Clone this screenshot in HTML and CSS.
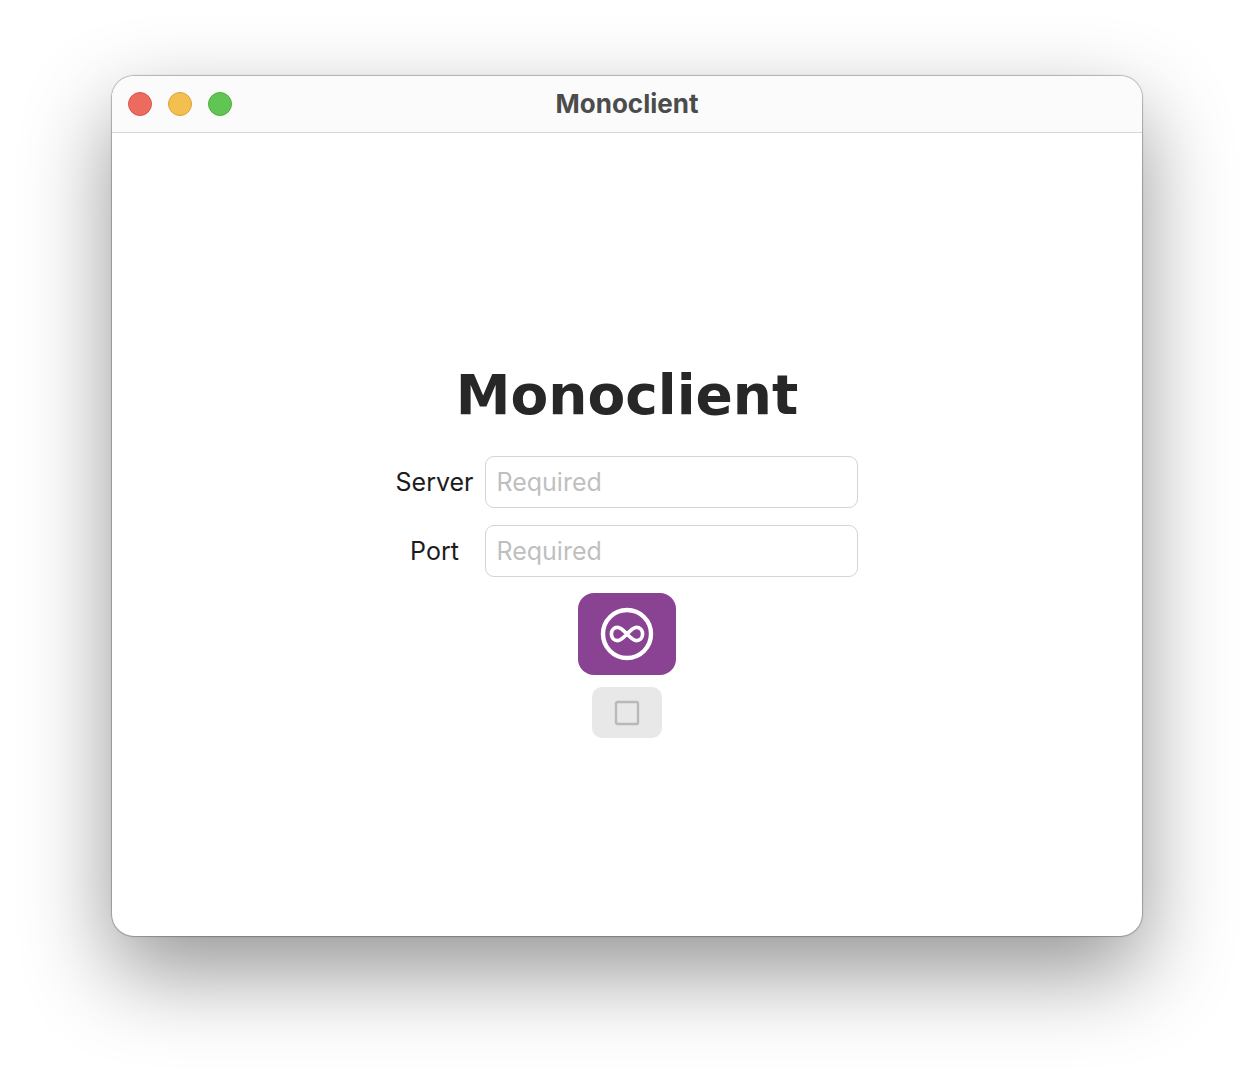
FILE: index.html
```html
<!DOCTYPE html>
<html lang="en">
<head>
<meta charset="utf-8">
<meta name="viewport" content="width=device-width, initial-scale=1">
<title>Monoclient</title>
<link rel="stylesheet" href="styles.css">
</head>
<body>
<div class="window">
  <header class="titlebar">
    <div class="controls">
      <button class="dot close" type="button" aria-label="Close"></button>
      <button class="dot minimize" type="button" aria-label="Minimize"></button>
      <button class="dot maximize" type="button" aria-label="Zoom"></button>
    </div>
    <div class="window-title">Monoclient</div>
  </header>
  <main class="content">
    <h1 class="heading">Monoclient</h1>
    <form class="form">
      <div class="fields">
        <label class="label" for="server">Server</label>
        <input class="input" id="server" type="text" placeholder="Required">
        <label class="label" for="port">Port</label>
        <input class="input" id="port" type="text" placeholder="Required">
      </div>
      <button class="connect" type="button" aria-label="Connect">
        <svg width="54" height="54" viewBox="0 0 54 54" fill="none" stroke="#fff" stroke-linecap="round" stroke-linejoin="round">
          <circle cx="27" cy="27" r="24" stroke-width="4.4"/>
          <path stroke-width="3.7" d="M27 27C23 23 20.6 20.4 17.6 20.4C14 20.4 11.4 23.2 11.4 27C11.4 30.8 14 33.6 17.6 33.6C20.6 33.6 23 31 27 27C31 23 33.4 20.4 36.4 20.4C40 20.4 42.6 23.2 42.6 27C42.6 30.8 40 33.6 36.4 33.6C33.4 33.6 31 31 27 27Z"/>
        </svg>
      </button>
      <button class="stop" type="button" aria-label="Stop" disabled>
        <svg width="26" height="26" viewBox="0 0 26 26" fill="none" stroke="#b9b9b9" stroke-width="2.4">
          <rect x="2" y="2" width="22" height="22" rx="1.6"/>
        </svg>
      </button>
    </form>
  </main>
</div>
</body>
</html>
```
FILE: styles.css
```css
* {
  box-sizing: border-box;
}

body {
  margin: 0;
  min-height: 100vh;
  padding: 76px 112px 148px;
  display: flex;
  background: #fff;
  color: #1c1c1c;
  font-family: Inter, "Liberation Sans", sans-serif;
  font-size: 25px;
  overflow: hidden;
}

button {
  border: 0;
  padding: 0;
}

.window {
  flex: 1;
  display: flex;
  flex-direction: column;
  border-radius: 22px;
  background: #fff;
  box-shadow: 0 0 1px 1px rgba(0, 0, 0, 0.26), 0 36px 88px rgba(0, 0, 0, 0.42);
}

.titlebar {
  display: grid;
  grid-template-columns: 1fr auto 1fr;
  align-items: center;
  height: 57px;
  padding: 0 16px;
  border-bottom: 1px solid #d8d8d8;
  border-radius: 22px 22px 0 0;
  background: #fbfbfb;
}

.controls {
  display: flex;
  gap: 16px;
}

.dot {
  width: 24px;
  height: 24px;
  border: 1px solid;
  border-radius: 50%;
}

.close {
  background: #ec6a5e;
  border-color: #d8574c;
}

.minimize {
  background: #f4bf4f;
  border-color: #d9a33a;
}

.maximize {
  background: #61c554;
  border-color: #4fad3e;
}

.window-title {
  color: #4c4c4c;
  font-weight: 700;
  font-size: 26px;
  line-height: 32px;
}

.content {
  flex: 1;
  display: flex;
  flex-direction: column;
  align-items: center;
  justify-content: center;
}

.heading {
  margin: 32px 0 29px;
  color: #272727;
  font-family: "DejaVu Sans", sans-serif;
  font-size: 55px;
  font-weight: 700;
  line-height: 64px;
}

.form {
  display: flex;
  flex-direction: column;
  align-items: center;
  gap: 12px;
}

.fields {
  display: grid;
  grid-template-columns: auto 373px;
  align-items: center;
  gap: 17px 12px;
  margin-bottom: 4px;
}

.label {
  line-height: 32px;
  text-align: center;
}

.input {
  width: 100%;
  height: 52px;
  padding: 0 10px;
  border: 1px solid #d4d4d4;
  border-radius: 9px;
  background: #fff;
  color: #1c1c1c;
  font: inherit;
}

.input::placeholder {
  color: #bfbfbf;
  opacity: 1;
}

.connect,
.stop {
  display: flex;
  align-items: center;
  justify-content: center;
}

.connect {
  width: 98px;
  height: 82px;
  border-radius: 16px;
  background: #8a4292;
}

.stop {
  width: 70px;
  height: 51px;
  border-radius: 10px;
  background: #e8e8e8;
}
```
